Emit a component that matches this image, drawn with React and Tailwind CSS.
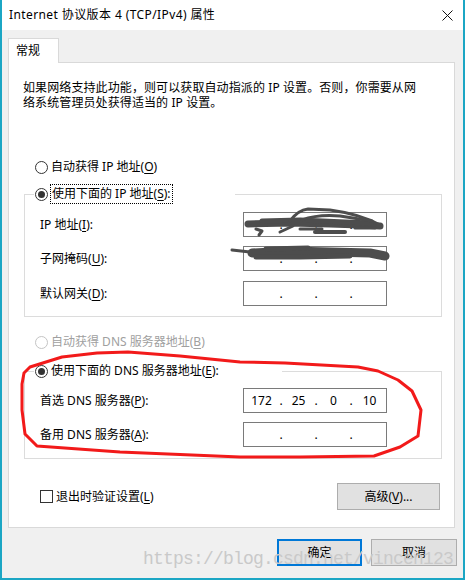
import React from "react";

function Radio({ checked, disabled }) {
  return (
    <span
      className={
        disabled
          ? "w-[13px] h-[13px] rounded-full border border-[#c4c4c4] bg-white flex items-center justify-center shrink-0"
          : "w-[13px] h-[13px] rounded-full border border-[#333333] bg-white flex items-center justify-center shrink-0"
      }
    >
      {checked && <span className="w-[7px] h-[7px] rounded-full bg-[#333333]" />}
    </span>
  );
}

function IpBox({ values }) {
  const v = values || ["", "", "", ""];
  return (
    <div className="w-[144px] h-[25px] border border-[#7a7a7a] bg-white flex items-center text-[12px] leading-[14px] text-black shrink-0">
      <span className="w-[35px] text-center">{v[0]}</span>
      <span className="w-[4px] text-center">.</span>
      <span className="w-[31px] text-center">{v[1]}</span>
      <span className="w-[4px] text-center">.</span>
      <span className="w-[31px] text-center">{v[2]}</span>
      <span className="w-[4px] text-center">.</span>
      <span className="w-[33px] text-center">{v[3]}</span>
    </div>
  );
}

function Field({ label, k, values, className }) {
  return (
    <div className={"flex items-center h-[25px] " + (className || "")}>
      <div className="w-[218px] pl-[15px] text-[12px] leading-[14px]">
        {label}(<u className="underline-offset-2">{k}</u>):
      </div>
      <IpBox values={values} />
    </div>
  );
}

export default function App() {
  return (
    <div className="relative w-[465px] h-[580px] bg-[#f0f0f0] border-x-2 border-b-2 border-[#1ba6c4] flex flex-col font-['Noto_Sans','Noto_Sans_CJK_SC',sans-serif] text-[12px] text-black overflow-hidden">
      {/* Title bar */}
      <div className="h-[30px] bg-white flex items-center justify-between pl-[7px] pr-[10px] shrink-0">
        <span className="text-[12px] leading-[14px] tracking-[0.4px]">Internet 协议版本 4 (TCP/IPv4) 属性</span>
        <svg width="11" height="11" viewBox="0 0 11 11">
          <path d="M0.5 0.5 L10.5 10.5 M10.5 0.5 L0.5 10.5" stroke="#111" strokeWidth="1" />
        </svg>
      </div>

      {/* Tab strip */}
      <div className="mt-[8px] pl-[6px] flex shrink-0">
        <div className="h-[25px] w-[51px] bg-white border border-b-0 border-[#d9d9d9] pl-[7px] flex items-center relative z-10 -mb-px">
          <span className="leading-[14px]">常规</span>
        </div>
      </div>

      {/* Panel */}
      <div className="ml-[6px] w-[447px] bg-white border border-[#d9d9d9] flex flex-col shrink-0">
        <p className="mt-[17px] ml-[14px] leading-[15px] whitespace-nowrap tracking-[0.1px]">
          如果网络支持此功能，则可以获取自动指派的 IP 设置。否则，你需要从网
          <br />
          络系统管理员处获得适当的 IP 设置。
        </p>

        <div className="mt-[47px] ml-[26px] h-[20px] flex items-center gap-[3px]">
          <Radio />
          <span className="leading-[14px]">
            自动获得 IP 地址(<u className="underline-offset-2">O</u>)
          </span>
        </div>

        {/* group 1 */}
        <div className="mt-[17px] ml-[15px] w-[418px] border border-[#dcdcdc] flex flex-col pb-[10px]">
          <div className="-mt-[11px] ml-[9px] pl-[1px] w-[201px] h-[20px] bg-white flex items-center gap-[2px]">
            <Radio checked />
            <span className="leading-[14px] border border-dotted border-black px-[1px] py-[2px]">
              使用下面的 IP 地址(<u className="underline-offset-2">S</u>):
            </span>
          </div>
          <Field label="IP 地址" k="I" className="mt-[8px]" />
          <Field label="子网掩码" k="U" className="mt-[9px]" />
          <Field label="默认网关" k="D" className="mt-[10px]" />
        </div>

        <div className="mt-[15px] ml-[26px] h-[20px] flex items-center gap-[3px] text-[#a0a0a0]">
          <Radio disabled />
          <span className="leading-[14px]">
            自动获得 DNS 服务器地址(<u className="underline-offset-2">B</u>)
          </span>
        </div>

        {/* group 2 */}
        <div className="mt-[19px] ml-[15px] w-[418px] border border-[#dcdcdc] flex flex-col pb-[11px]">
          <div className="-mt-[11px] ml-[9px] pl-[1px] w-[248px] h-[20px] bg-white flex items-center gap-[3px]">
            <Radio checked />
            <span className="leading-[14px]">
              使用下面的 DNS 服务器地址(<u className="underline-offset-2">E</u>):
            </span>
          </div>
          <Field label="首选 DNS 服务器" k="P" values={["172", "25", "0", "10"]} className="mt-[7px]" />
          <Field label="备用 DNS 服务器" k="A" className="mt-[9px]" />
        </div>

        <div className="mt-[24px] mb-[17px] ml-[31px] mr-[14px] flex items-center justify-between">
          <div className="flex items-center gap-[3px]">
            <span className="w-[13px] h-[13px] border border-[#333333] bg-white shrink-0" />
            <span className="leading-[14px]">
              退出时验证设置(<u className="underline-offset-2">L</u>)
            </span>
          </div>
          <div className="w-[103px] h-[27px] bg-[#e1e1e1] border border-[#adadad] flex items-center justify-center leading-[14px]">
            高级(<u className="underline-offset-2">V</u>)...
          </div>
        </div>
      </div>

      {/* Footer buttons */}
      <div className="mt-[11px] flex justify-end gap-[9px] pr-[6px]">
        <div className="w-[85px] h-[27px] bg-[#e1e1e1] border-2 border-[#0078d7] flex items-center justify-center leading-[14px]">
          确定
        </div>
        <div className="w-[86px] h-[27px] bg-[#e1e1e1] border border-[#adadad] flex items-center justify-center leading-[14px]">
          取消
        </div>
      </div>

      {/* Watermark */}
      <div className="absolute left-[141px] top-[549px] font-['Liberation_Mono',monospace] text-[18px] leading-[20px] tracking-[-0.8px] text-[#c9c9c9] pointer-events-none whitespace-nowrap">
        https://blog.csdn.net/vincen123
      </div>

      {/* Overlay drawings: scribbles and red circle */}
      <svg
        className="absolute left-[-2px] top-0 pointer-events-none"
        width="465"
        height="580"
        viewBox="0 0 465 580"
        fill="none"
      >
        <g stroke="#4d4d4d" strokeLinecap="round" strokeLinejoin="round">
          <path d="M248 224 L290 223 L330 224 L360 225 L380 226" strokeWidth="7" />
          <path d="M262 221 L300 220 L345 222 L372 223" strokeWidth="5" />
          <path d="M290 221 Q298 210 308 209 L330 210 Q360 214 380 225" strokeWidth="3" />
          <path d="M302 220 Q318 214 340 216 L372 221" strokeWidth="3" />
          <path d="M256 229 L262 231 L259 235" strokeWidth="3" />
          <path d="M280 232 L293 226" strokeWidth="3" />
          <path d="M315 232 L345 232" strokeWidth="4" />
          <path d="M300 229 L322 229" strokeWidth="3" />
          <path d="M355 228 L375 228" strokeWidth="3" />

          <path d="M232 250 L250 252" strokeWidth="3" />
          <path d="M252 253 L290 251 L330 252 L370 253 L385 256" strokeWidth="9" />
          <path d="M256 257 L300 257 L350 256" strokeWidth="5" />
          <path d="M266 249 L308 248" strokeWidth="5" />
        </g>
        <path
          d="M128 352 L180 356 L240 362 L285 363 L358 367 L378 371 L398 380 L412 391 L421 410 L418 436 L400 447 L374 456 L300 457 L240 457 L120 452 L37 446 L25 434 L22 410 L22 384 L24 373 L30 367 L62 357 L97 353 Z"
          stroke="#f21a1a"
          strokeWidth="3"
          strokeLinejoin="round"
        />
      </svg>
    </div>
  );
}
